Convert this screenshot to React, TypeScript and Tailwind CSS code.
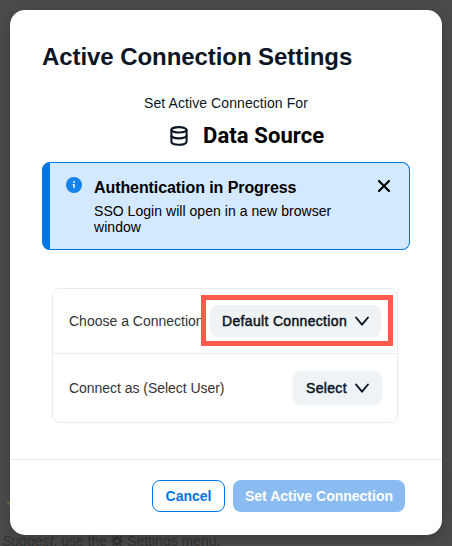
function Chevron() {
  return (
    <svg className="h-[11px] w-4 shrink-0" viewBox="0 0 16 11" fill="none" stroke="#0c1626" strokeWidth="1.9" strokeLinecap="round" strokeLinejoin="round">
      <path d="M2 1.5 L8 8.7 L14 1.5" />
    </svg>
  );
}

function DatabaseIcon() {
  return (
    <svg className="h-5 w-[18px]" viewBox="0 0 18 20" fill="none" stroke="#0c1626" strokeWidth="2.1">
      <ellipse cx="9" cy="3.8" rx="7.6" ry="2.7" />
      <path d="M1.4 3.8v12c0 1.7 3.4 3 7.6 3s7.6-1.3 7.6-3v-12" />
      <path d="M1.4 9.4c0 1.7 3.4 3 7.6 3s7.6-1.3 7.6-3" />
    </svg>
  );
}

function Backdrop() {
  return (
    <div className="absolute inset-0 overflow-hidden bg-[#4a4a4a]">
      <div className="absolute inset-x-0 top-[475px] h-[31px] border-y border-[#444444]" />
      <div className="absolute left-[7px] top-[502px] h-[3px] w-[3px] bg-[#75613d]" />
      <p className="absolute left-[2px] top-[532px] flex items-center whitespace-nowrap text-[14px] leading-[18px] text-[#323232]">
        <i>Suggest</i>
        <span>, use the</span>
        <svg className="mx-1 size-3" viewBox="0 0 12 12" fill="none" stroke="#323232">
          <circle cx="6" cy="6" r="3.1" strokeWidth="2.6" />
          <path d="M6 0v2M6 10v2M0 6h2M10 6h2M1.8 1.8l1.4 1.4M8.8 8.8l1.4 1.4M10.2 1.8L8.8 3.2M3.2 8.8l-1.4 1.4" strokeWidth="2" />
        </svg>
        <span>Settings menu.</span>
      </p>
    </div>
  );
}

export default function App() {
  return (
    <div className="relative h-[546px] w-[452px] overflow-hidden p-[10px] font-['Liberation_Sans',Arial,sans-serif]">
      <Backdrop />
      <section className="relative flex h-[525px] w-[432px] flex-col rounded-[15px] bg-white shadow-[0_4px_12px_rgba(0,0,0,0.2)]">
        <h1 className="ml-8 mt-[33px] whitespace-nowrap text-[24px] font-bold leading-7 tracking-[-0.07px] text-[#0c1626]">Active Connection Settings</h1>
        <p className="mt-[24px] text-center text-[14px] leading-4 tracking-[0.08px] text-[#0c1626]">Set Active Connection For</p>
        <div className="ml-[160px] mt-[13px] flex h-6 items-center gap-[15px]">
          <DatabaseIcon />
          <h2 className="whitespace-nowrap font-['Roboto',sans-serif] text-[22px] font-bold leading-6 tracking-[0.1px] text-black">Data Source</h2>
        </div>
        <div className="ml-8 mt-[14px] flex h-[88px] w-[368px] rounded-lg border border-l-8 border-[#0075e4] bg-[#d3e9ff] pl-4 pt-[14px]">
          <svg className="size-4 shrink-0" viewBox="0 0 16 16">
            <circle cx="8" cy="8" r="8" fill="#1483eb" />
            <path d="M7.2 4h1.7v1.7H7.2zM6.6 7h2.3v4H7.2V8.3h-.6z" fill="#d9edff" />
          </svg>
          <div className="ml-3 w-[260px] text-black">
            <h3 className="mt-px whitespace-nowrap text-[16px] font-bold leading-5 tracking-[-0.08px]">Authentication in Progress</h3>
            <p className="mt-[5px] text-[14px] leading-4 tracking-[0.04px]">SSO Login will open in a new browser<br />window</p>
          </div>
          <svg className="ml-6 mt-[3px] size-3 shrink-0" viewBox="0 0 12 12" stroke="#000" strokeWidth="2.2" strokeLinecap="round">
            <path d="M1 1l10 10M11 1L1 11" />
          </svg>
        </div>
        <div className="ml-[42px] mt-[38px] h-[135px] w-[346px] rounded-lg border border-[#ebebeb] text-[14px] text-[#333333]">
          <div className="flex h-[65px] items-center border-b border-[#ebebeb] pl-4">
            <span className="w-[132px] shrink-0 whitespace-nowrap">Choose a Connection</span>
            <div className="relative -top-px h-[51px] w-[192px] shrink-0 border-[5px] border-[#ff5a4c] bg-white px-1 py-[5px]">
              <button className="flex h-8 w-[171px] items-center rounded-lg bg-[#eff3f6] pl-3 pt-0.5 text-[#0c1626] [-webkit-text-stroke:0.5px_#0c1626]">
                <span className="w-[132px] whitespace-nowrap text-left tracking-[0.33px]">Default Connection</span>
                <Chevron />
              </button>
            </div>
          </div>
          <div className="flex h-[68px] items-center justify-between pl-4 pr-[15px]">
            <span className="tracking-[-0.04px]">Connect as (Select User)</span>
            <button className="flex h-[34px] w-[89px] items-center rounded-lg bg-[#eff3f6] pl-[13px] text-[#0c1626] shadow-[0_0_2px_#eff3f6] [-webkit-text-stroke:0.5px_#0c1626]">
              <span className="w-12 text-left tracking-[0.33px]">Select</span>
              <Chevron />
            </button>
          </div>
        </div>
        <footer className="mt-[36px] flex h-[76px] items-start gap-2 border-t border-[#ebebeb] pl-[142px] pt-5 text-[14px] font-bold">
          <button className="h-8 w-[73px] rounded-lg border border-[#0075e4] text-[#0075e4]">Cancel</button>
          <button className="h-8 w-[172px] rounded-lg bg-[#8bbcf1] text-white">Set Active Connection</button>
        </footer>
      </section>
    </div>
  );
}
